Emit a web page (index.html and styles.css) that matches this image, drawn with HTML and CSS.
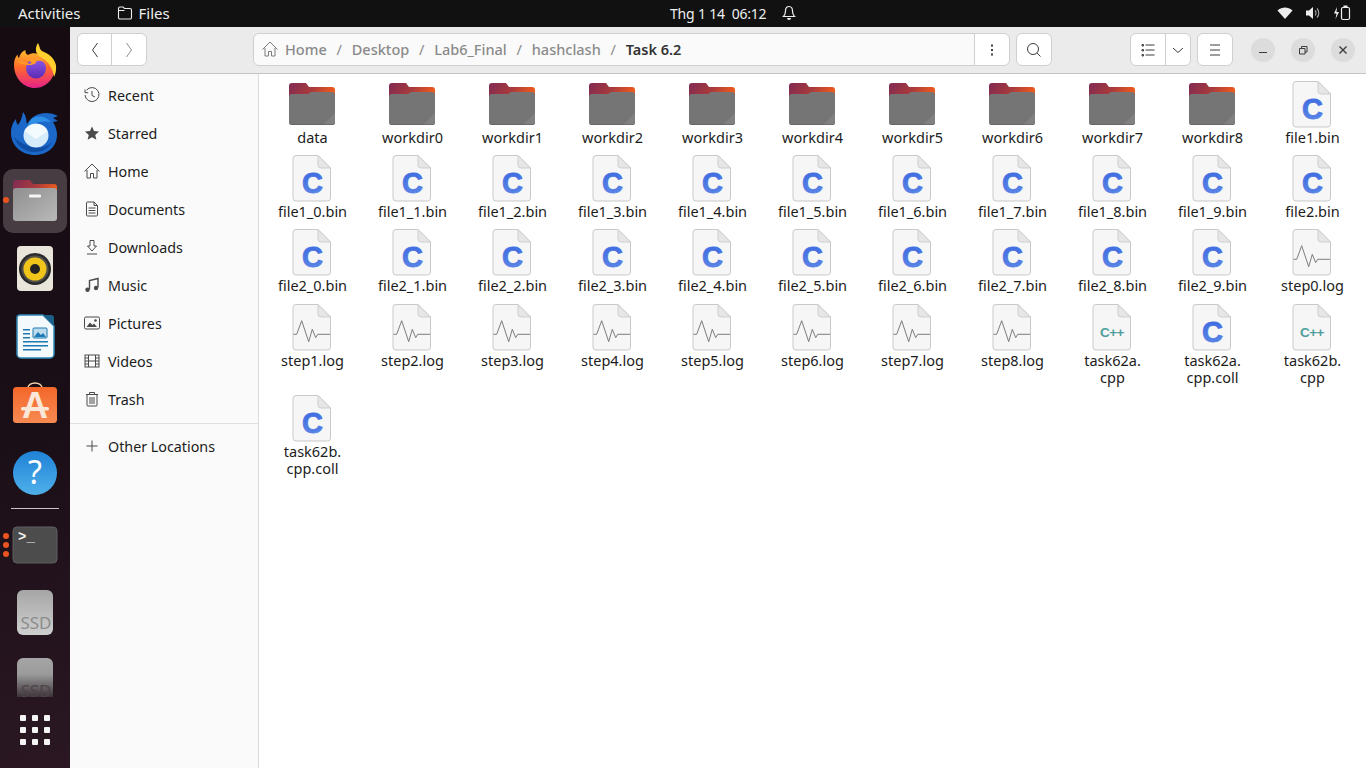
FILE: index.html
```html
<!DOCTYPE html>
<html lang="en">
<head>
    <meta charset="UTF-8">
    <title>Files</title>
    <link rel="stylesheet" href="styles.css">
</head>
<body>
    <!-- shared file icons -->
    <svg class="defs" width="0" height="0">
        <defs>
            <linearGradient id="folderBack" x1="0" y1="0" x2="1" y2="0.3">
                <stop offset="0" stop-color="#7f2a55"/>
                <stop offset="0.55" stop-color="#a83a3c"/>
                <stop offset="1" stop-color="#ec5a1e"/>
            </linearGradient>
            <linearGradient id="cBlue" x1="0" y1="0" x2="0" y2="1">
                <stop offset="0" stop-color="#3a68e0"/>
                <stop offset="1" stop-color="#5f88e6"/>
            </linearGradient>
            <symbol id="folder" viewBox="0 0 48 48">
                <path d="M1 6a3 3 0 0 1 3-3h14l3 4h23a3 3 0 0 1 3 3v12H1z" fill="url(#folderBack)"/>
                <path d="M1 17a3 3 0 0 1 3-3h16l3-2h21a3 3 0 0 1 3 3v27a3 3 0 0 1-3 3H4a3 3 0 0 1-3-3z" fill="#757575"/>
                <path d="M47 33v9a3 3 0 0 1-3 3h-9z" fill="#818181"/>
                <path d="M4 45h40a3 3 0 0 0 3-3v-.6a3 3 0 0 1-3 3H4a3 3 0 0 1-3-3v.6a3 3 0 0 0 3 3z" fill="#5a5a5a"/>
            </symbol>
            <symbol id="sheet" viewBox="0 0 48 48">
                <path d="M8 1.5h22l12.500 12.500V44a3 3 0 0 1-3 3H8a3 3 0 0 1-3-3V4.500a3 3 0 0 1 3-3z" fill="#f6f6f6" stroke="#c9c9c9"/>
                <path d="M30 1.500v9.500a3 3 0 0 0 3 3h9.500z" fill="#e6e6e6" stroke="#cfcfcf"/>
            </symbol>
            <symbol id="cfile" viewBox="0 0 48 48">
                <use href="#sheet" width="48" height="48"/>
                <text x="24.500" y="39" text-anchor="middle" class="c-letter">C</text>
            </symbol>
            <symbol id="cppfile" viewBox="0 0 48 48">
                <use href="#sheet" width="48" height="48"/>
                <text x="24" y="33.700" text-anchor="middle" class="cpp-letter">C++</text>
            </symbol>
            <symbol id="logfile" viewBox="0 0 48 48">
                <use href="#sheet" width="48" height="48"/>
                <path d="M5.500 31.300h3.200l5-13.600 7 21 3.600-12.400 3.400 8.400 2-3.400h12.300" fill="none" stroke="#7d7d7d"/>
            </symbol>
        </defs>
    </svg>

    <header class="topbar">
        <div class="top-left">
            <span class="activities">Activities</span>
            <svg class="top-folder" width="16" height="16" viewBox="0 0 16 16"><path d="M1.500 3.500a1.500 1.500 0 0 1 1.500-1.500h3l1.500 1.500H13a1.500 1.500 0 0 1 1.500 1.500v7.500a1.500 1.500 0 0 1-1.500 1.500H3a1.500 1.500 0 0 1-1.500-1.500zM1.500 5.500H7.500" fill="none" stroke="#eee" stroke-width="1.100"/></svg>
            <span>Files</span>
        </div>
        <span class="clock">Thg 1 14&nbsp; 06:12</span>
        <svg class="bell" width="16" height="16" viewBox="0 0 16 16"><path d="M8 1.500c-2.500 0-3.500 2-3.500 4.500 0 3-1 4.500-2 5.500h11c-1-1-2-2.500-2-5.500 0-2.500-1-4.500-3.500-4.500zM6.500 13.500h3" fill="none" stroke="#eee" stroke-width="1.200"/><path d="M6 13.300h4a2 1.600 0 0 1-4 0z" fill="#eee"/></svg>
        <div class="top-right">
            <svg width="16" height="16" viewBox="0 0 16 16"><path d="M0.500 5.500C3 3.300 5.500 2.500 8 2.500s5 .8 7.500 3L8 14z" fill="#eee"/></svg>
            <svg width="16" height="16" viewBox="0 0 16 16"><path d="M1 5.500h3l4-3.500v12l-4-3.500H1z" fill="#eee"/><path d="M10 5.500a3.500 3.500 0 0 1 0 5M12 3.500a6.500 6.500 0 0 1 0 9" fill="none" stroke="#aaa" stroke-width="1.100"/></svg>
            <svg width="18" height="16" viewBox="0 0 18 16"><path d="M4 2L1 8.500h2.500L2.500 14 6 7H3.500z" fill="#eee"/><rect x="8.500" y="2.500" width="8" height="12" rx="1.500" fill="none" stroke="#eee" stroke-width="1.200"/><rect x="10.500" y="0.500" width="4" height="2" fill="#eee"/></svg>
        </div>
    </header>

    <div class="desktop">
        <nav class="dock">
            <div class="dock-item">
                <svg width="48" height="48" viewBox="0 0 48 48">
                    <defs>
                        <linearGradient id="fxBody" x1="0.500" y1="0" x2="0.500" y2="1">
                            <stop offset="0" stop-color="#ffbd2f"/>
                            <stop offset="0.45" stop-color="#ff6b2a"/>
                            <stop offset="1" stop-color="#e5208a"/>
                        </linearGradient>
                        <linearGradient id="fxCore" x1="0.500" y1="0" x2="0.500" y2="1">
                            <stop offset="0" stop-color="#8f5ae8"/>
                            <stop offset="1" stop-color="#5a2bb5"/>
                        </linearGradient>
                    </defs>
                    <path d="M3 24c0-4 1-8 3.500-10.500 0 2 .8 3 1.500 3.500C9 13 11 10.500 14.500 9c-.5 2.500.5 4 2.500 5 3-2 7-2.500 10-1 6 2 12 0 17.500 10 .5 13-8.500 24-20.500 24C12.500 47 3 37 3 24z" fill="url(#fxBody)"/>
                    <path d="M27 2c3 6 1 7 6 9 6 2.500 11 7 12 14 .5 4-.5 8-2 11-1-7-4-13-9-17-3-2.500-8-4-9-9-.5-3 .5-6 2-8z" fill="#ffd02f"/>
                    <circle cx="25" cy="27.500" r="10" fill="url(#fxCore)"/>
                    <path d="M6 21c4-1 7 0 9.500 1 2 1 5 .5 5 .5-1-3-4-3.500-6-3.500 3-3 9-3.500 14-1.500 2 1 3.500 2 4.500 3.500-3-1.500-6-1.500-8-.5 1 1-2 3.500-6.500 3.500-5 0-10-1.500-12.500-3z" fill="#ff9a2a"/>
                </svg>
            </div>
            <div class="dock-item">
                <svg width="48" height="48" viewBox="0 0 48 48">
                    <path d="M12 3c4 5 3 9 4 12C22 4 36 1 47 7l-5 2 5 3-5 1c3 5 4 9 4 13 0 11-9 20-22 20C11 46 0 37 0 24 0 18 2 13 5 10c0 3 1 5 2 6 3-4 4-8 5-13z" fill="#1b68c9"/>
                    <path d="M22 9c7-3 14-1 18 4-5-1-12-1-18 2-3 1.500-4 3-5 4 0-4 2-8 5-10z" fill="#2f8ee6"/>
                    <path d="M3 28c3 9 11 15 21 15 8 0 14-4 17-10-5 5-13 7-20 5-8-2-14-6-18-10z" fill="#0f4da5"/>
                    <ellipse cx="25" cy="26.500" rx="12.500" ry="12" fill="#d6ecfb"/>
                    <path d="M13.500 22l11.500 8 11.500-8c-1.500-4-6-7-11.500-7s-10 3-11.500 7z" fill="#f4fbff"/>
                </svg>
            </div>
            <div class="dock-item dock-active">
                <span class="run-dot"></span>
                <svg width="48" height="48" viewBox="0 0 48 48">
                    <defs>
                        <linearGradient id="filesFront" x1="0" y1="0" x2="1" y2="1">
                            <stop offset="0" stop-color="#8f8f8f"/>
                            <stop offset="1" stop-color="#b9b9b9"/>
                        </linearGradient>
                    </defs>
                    <path d="M2 6a3 3 0 0 1 3-3h14l3 4h21a3 3 0 0 1 3 3v14H2z" fill="url(#folderBack)"/>
                    <path d="M2 14a3 3 0 0 1 3-3h38a3 3 0 0 1 3 3v27a3 3 0 0 1-3 3H5a3 3 0 0 1-3-3z" fill="url(#filesFront)"/>
                    <rect x="18" y="17.500" width="12" height="3" rx="1" fill="#f5f5f5"/>
                </svg>
            </div>
            <div class="dock-item">
                <svg width="48" height="48" viewBox="0 0 48 48">
                    <rect x="6" y="1" width="36" height="45" rx="4" fill="#e9e5da"/>
                    <circle cx="24" cy="24" r="16" fill="#2a2a2c"/>
                    <circle cx="24" cy="24" r="13.500" fill="#55524a"/>
                    <circle cx="24" cy="24" r="11.500" fill="#f0c419"/>
                    <circle cx="24" cy="24" r="5" fill="#232323"/>
                </svg>
            </div>
            <div class="dock-item">
                <svg width="48" height="48" viewBox="0 0 48 48">
                    <path d="M9 2h23l11 11v28a4 4 0 0 1-4 4H10a4 4 0 0 1-4-4V5a3 3 0 0 1 3-3z" fill="#f4f9fb" stroke="#2f86b8" stroke-width="1.500"/>
                    <path d="M32 2h8a3 3 0 0 1 3 3v8z" fill="#1c5f87"/>
                    <path d="M12 16h7v1.500h-7zM12 20h7v1.500h-7zM12 24h7v1.500h-7zM12 28h25v1.500H12zM12 32h25v1.500H12zM12 36h18v1.500H12z" fill="#1f78b4"/>
                    <rect x="22" y="15" width="14" height="10" rx="1" fill="#bcdcec" stroke="#1f78b4"/>
                    <path d="M23 24l4-5 3 3 2-2 3 4z" fill="#1f78b4"/>
                </svg>
            </div>
            <div class="dock-item">
                <svg width="48" height="48" viewBox="0 0 48 48">
                    <defs>
                        <linearGradient id="bag" x1="0" y1="0" x2="0" y2="1">
                            <stop offset="0" stop-color="#f4672a"/>
                            <stop offset="1" stop-color="#f78a52"/>
                        </linearGradient>
                    </defs>
                    <path d="M17 9V7a7 5 0 0 1 14 0v2" fill="none" stroke="#f0d0a8" stroke-width="1.500"/>
                    <rect x="2" y="6" width="44" height="36" rx="3.500" fill="url(#bag)"/>
                    <text x="24" y="37" text-anchor="middle" class="bag-letter">A</text>
                    <rect x="10" y="26" width="28" height="3.500" rx="1.500" fill="#fbe6da"/>
                </svg>
            </div>
            <div class="dock-item">
                <svg width="48" height="48" viewBox="0 0 48 48">
                    <defs>
                        <linearGradient id="helpBlue" x1="0" y1="0" x2="0" y2="1">
                            <stop offset="0" stop-color="#1f82d6"/>
                            <stop offset="1" stop-color="#4fb0ea"/>
                        </linearGradient>
                    </defs>
                    <circle cx="24" cy="24" r="22" fill="url(#helpBlue)"/>
                    <text x="24" y="35" text-anchor="middle" class="help-mark">?</text>
                </svg>
            </div>
            <div class="dock-sep"></div>
            <div class="dock-item">
                <span class="run-dot run-a"></span>
                <span class="run-dot run-b"></span>
                <span class="run-dot run-c"></span>
                <svg width="48" height="48" viewBox="0 0 48 48">
                    <rect x="2" y="6" width="44" height="36" rx="4" fill="#4c4c4c" stroke="#5e5e5e"/>
                    <text x="7" y="20" class="term-prompt">&gt;_</text>
                </svg>
            </div>
            <div class="dock-item">
                <svg width="48" height="48" viewBox="0 0 48 48">
                    <defs>
                        <linearGradient id="ssdBody" x1="0" y1="0" x2="0" y2="1">
                            <stop offset="0" stop-color="#a6a6a6"/>
                            <stop offset="1" stop-color="#cfcfcf"/>
                        </linearGradient>
                    </defs>
                    <rect x="6" y="1" width="36" height="45" rx="6" fill="url(#ssdBody)"/>
                    <text x="25" y="40" text-anchor="middle" class="ssd-label">SSD</text>
                </svg>
            </div>
            <div class="dock-item dock-faded">
                <svg width="48" height="48" viewBox="0 0 48 48">
                    <defs>
                        <linearGradient id="ssdFade" x1="0" y1="0" x2="0" y2="1">
                            <stop offset="0" stop-color="#a6a6a6"/>
                            <stop offset="0.42" stop-color="#9a9a9a"/>
                            <stop offset="1" stop-color="#3c3238"/>
                        </linearGradient>
                    </defs>
                    <path d="M6 7a6 6 0 0 1 6-6h24a6 6 0 0 1 6 6v33H6z" fill="url(#ssdFade)"/>
                    <text x="25" y="40" text-anchor="middle" class="ssd-label ssd-dim">SSD</text>
                </svg>
            </div>
            <div class="app-grid">
                <i></i><i></i><i></i><i></i><i></i><i></i><i></i><i></i><i></i>
            </div>
        </nav>

        <div class="window">
            <div class="headerbar">
                <div class="btn-group nav-btns">
                    <button class="btn"><svg width="16" height="16" viewBox="0 0 16 16"><path d="M10.500 1L5.500 8l5 7" class="line"/></svg></button>
                    <button class="btn"><svg width="16" height="16" viewBox="0 0 16 16"><path d="M5.500 1l5 7-5 7" class="line dim"/></svg></button>
                </div>
                <div class="btn-group pathbar">
                    <div class="path">
                        <svg class="path-home" width="16" height="16" viewBox="0 0 16 16"><path d="M0.500 8.500L8 1l7.500 7.500M3 7v8h3.500v-4.500h3V15H13V7" class="line dim2"/></svg>
                        <span class="crumb">Home</span><span class="slash">/</span>
                        <span class="crumb">Desktop</span><span class="slash">/</span>
                        <span class="crumb">Lab6_Final</span><span class="slash">/</span>
                        <span class="crumb">hashclash</span><span class="slash">/</span>
                        <span class="crumb current">Task 6.2</span>
                    </div>
                    <button class="btn btn-more"><svg width="16" height="16" viewBox="0 0 16 16"><path d="M7 2.500h2v2H7zM7 7h2v2H7zM7 11.500h2v2H7z" fill="#3d3d3d"/></svg></button>
                </div>
                <button class="btn btn-solo search-btn"><svg width="16" height="16" viewBox="0 0 16 16"><circle cx="7" cy="7" r="5.500" class="line"/><path d="M11 11l3.500 3.500" class="line"/></svg></button>
                <div class="btn-group view-btns">
                    <button class="btn"><svg width="16" height="16" viewBox="0 0 16 16"><path d="M5.500 3h9M5.500 8h9M5.500 13h9M2 2.500h1.500V4H2zM2 7.500h1.500V9H2zM2 12.500h1.500V14H2z" class="line"/></svg></button>
                    <button class="btn btn-arrow"><svg width="12" height="12" viewBox="0 0 12 12"><path d="M1 4l5 4.500L11 4" class="line"/></svg></button>
                </div>
                <button class="btn btn-solo menu-btn"><svg width="16" height="16" viewBox="0 0 16 16"><path d="M3 3h10M3 8h10M3 13h10" class="line"/></svg></button>
                <div class="win-btns">
                    <span class="win-btn"><svg width="12" height="12" viewBox="0 0 12 12"><path d="M2 8.500h8" class="line"/></svg></span>
                    <span class="win-btn"><svg width="12" height="12" viewBox="0 0 12 12"><path d="M2.500 4.500h5.500v5.500H2.500zM4.500 4.500V2.500H10v5.500H8" class="line"/></svg></span>
                    <span class="win-btn"><svg width="12" height="12" viewBox="0 0 12 12"><path d="M2.500 2.500l7 7M9.500 2.500l-7 7" class="line thick"/></svg></span>
                </div>
            </div>

            <div class="content">
                <aside class="sidebar">
                    <a class="place"><svg width="16" height="16" viewBox="0 0 16 16"><path d="M2.500 3.200A7 7 0 1 1 1 8M1 2.500v3.200h3.200M8 4v4.500l3 1.500" class="line side"/></svg>Recent</a>
                    <a class="place"><svg width="16" height="16" viewBox="0 0 16 16"><path d="M8 1.500l2 4.600 5 .5-3.800 3.300 1.200 4.900L8 12.200l-4.400 2.600 1.200-4.900L1 6.600l5-.5z" fill="#4a4a4a"/></svg>Starred</a>
                    <a class="place"><svg width="16" height="16" viewBox="0 0 16 16"><path d="M0.500 8.500L8 1l7.500 7.500M3 7v8h3.500v-4.500h3V15H13V7" class="line side"/></svg>Home</a>
                    <a class="place"><svg width="16" height="16" viewBox="0 0 16 16"><path d="M2.500 2a1 1 0 0 1 1-1H10l3.500 3.500V14a1 1 0 0 1-1 1h-9a1 1 0 0 1-1-1zM10 1v3.500h3.500M4.500 7h7M4.500 9.500h7M4.500 12h7" class="line side"/></svg>Documents</a>
                    <a class="place"><svg width="16" height="16" viewBox="0 0 16 16"><path d="M6 1.500h4V7h2.500L8 12 3.500 7H6zM3 15h10" class="line side"/></svg>Downloads</a>
                    <a class="place"><svg width="16" height="16" viewBox="0 0 16 16"><path d="M5.500 12.500V3.500L14 1.500v9" class="line side thick"/><circle cx="3.500" cy="12.800" r="2.200" fill="#4a4a4a"/><circle cx="12" cy="11" r="2.200" fill="#4a4a4a"/></svg>Music</a>
                    <a class="place"><svg width="16" height="16" viewBox="0 0 16 16"><rect x="0.500" y="2" width="15" height="12" rx="1.500" class="line side"/><path d="M2.500 12l3.500-4.500 2.500 2.500 1.500-1.500 3 3.500z" fill="#4a4a4a"/><circle cx="11.500" cy="5.500" r="1.300" fill="#4a4a4a"/></svg>Pictures</a>
                    <a class="place"><svg width="16" height="16" viewBox="0 0 16 16"><rect x="1" y="2" width="14" height="12" class="line side"/><path d="M4.500 2v12M11.500 2v12M1 5h3.500M1 8h14M1 11h3.500M11.500 5H15M11.500 11H15" class="line side"/></svg>Videos</a>
                    <a class="place"><svg width="16" height="16" viewBox="0 0 16 16"><path d="M2 3.500h12M5.500 3.500V1.500h5v2M3 3.500V14a1 1 0 0 0 1 1h8a1 1 0 0 0 1-1V3.500M6 6v7M8 6v7M10 6v7" class="line side"/></svg>Trash</a>
                    <div class="side-sep"></div>
                    <a class="place"><svg width="16" height="16" viewBox="0 0 16 16"><path d="M8 2.500v11M2.500 8h11" class="line side"/></svg>Other Locations</a>
                </aside>

                <main class="files">
                    <div class="item"><svg class="icon"><use href="#folder"/></svg><span class="name">data</span></div>
                    <div class="item"><svg class="icon"><use href="#folder"/></svg><span class="name">workdir0</span></div>
                    <div class="item"><svg class="icon"><use href="#folder"/></svg><span class="name">workdir1</span></div>
                    <div class="item"><svg class="icon"><use href="#folder"/></svg><span class="name">workdir2</span></div>
                    <div class="item"><svg class="icon"><use href="#folder"/></svg><span class="name">workdir3</span></div>
                    <div class="item"><svg class="icon"><use href="#folder"/></svg><span class="name">workdir4</span></div>
                    <div class="item"><svg class="icon"><use href="#folder"/></svg><span class="name">workdir5</span></div>
                    <div class="item"><svg class="icon"><use href="#folder"/></svg><span class="name">workdir6</span></div>
                    <div class="item"><svg class="icon"><use href="#folder"/></svg><span class="name">workdir7</span></div>
                    <div class="item"><svg class="icon"><use href="#folder"/></svg><span class="name">workdir8</span></div>
                    <div class="item"><svg class="icon"><use href="#cfile"/></svg><span class="name">file1.bin</span></div>

                    <div class="item"><svg class="icon"><use href="#cfile"/></svg><span class="name">file1_0.bin</span></div>
                    <div class="item"><svg class="icon"><use href="#cfile"/></svg><span class="name">file1_1.bin</span></div>
                    <div class="item"><svg class="icon"><use href="#cfile"/></svg><span class="name">file1_2.bin</span></div>
                    <div class="item"><svg class="icon"><use href="#cfile"/></svg><span class="name">file1_3.bin</span></div>
                    <div class="item"><svg class="icon"><use href="#cfile"/></svg><span class="name">file1_4.bin</span></div>
                    <div class="item"><svg class="icon"><use href="#cfile"/></svg><span class="name">file1_5.bin</span></div>
                    <div class="item"><svg class="icon"><use href="#cfile"/></svg><span class="name">file1_6.bin</span></div>
                    <div class="item"><svg class="icon"><use href="#cfile"/></svg><span class="name">file1_7.bin</span></div>
                    <div class="item"><svg class="icon"><use href="#cfile"/></svg><span class="name">file1_8.bin</span></div>
                    <div class="item"><svg class="icon"><use href="#cfile"/></svg><span class="name">file1_9.bin</span></div>
                    <div class="item"><svg class="icon"><use href="#cfile"/></svg><span class="name">file2.bin</span></div>

                    <div class="item"><svg class="icon"><use href="#cfile"/></svg><span class="name">file2_0.bin</span></div>
                    <div class="item"><svg class="icon"><use href="#cfile"/></svg><span class="name">file2_1.bin</span></div>
                    <div class="item"><svg class="icon"><use href="#cfile"/></svg><span class="name">file2_2.bin</span></div>
                    <div class="item"><svg class="icon"><use href="#cfile"/></svg><span class="name">file2_3.bin</span></div>
                    <div class="item"><svg class="icon"><use href="#cfile"/></svg><span class="name">file2_4.bin</span></div>
                    <div class="item"><svg class="icon"><use href="#cfile"/></svg><span class="name">file2_5.bin</span></div>
                    <div class="item"><svg class="icon"><use href="#cfile"/></svg><span class="name">file2_6.bin</span></div>
                    <div class="item"><svg class="icon"><use href="#cfile"/></svg><span class="name">file2_7.bin</span></div>
                    <div class="item"><svg class="icon"><use href="#cfile"/></svg><span class="name">file2_8.bin</span></div>
                    <div class="item"><svg class="icon"><use href="#cfile"/></svg><span class="name">file2_9.bin</span></div>
                    <div class="item"><svg class="icon"><use href="#logfile"/></svg><span class="name">step0.log</span></div>

                    <div class="item"><svg class="icon"><use href="#logfile"/></svg><span class="name">step1.log</span></div>
                    <div class="item"><svg class="icon"><use href="#logfile"/></svg><span class="name">step2.log</span></div>
                    <div class="item"><svg class="icon"><use href="#logfile"/></svg><span class="name">step3.log</span></div>
                    <div class="item"><svg class="icon"><use href="#logfile"/></svg><span class="name">step4.log</span></div>
                    <div class="item"><svg class="icon"><use href="#logfile"/></svg><span class="name">step5.log</span></div>
                    <div class="item"><svg class="icon"><use href="#logfile"/></svg><span class="name">step6.log</span></div>
                    <div class="item"><svg class="icon"><use href="#logfile"/></svg><span class="name">step7.log</span></div>
                    <div class="item"><svg class="icon"><use href="#logfile"/></svg><span class="name">step8.log</span></div>
                    <div class="item"><svg class="icon"><use href="#cppfile"/></svg><span class="name">task62a.<br>cpp</span></div>
                    <div class="item"><svg class="icon"><use href="#cfile"/></svg><span class="name">task62a.<br>cpp.coll</span></div>
                    <div class="item"><svg class="icon"><use href="#cppfile"/></svg><span class="name">task62b.<br>cpp</span></div>

                    <div class="item"><svg class="icon"><use href="#cfile"/></svg><span class="name">task62b.<br>cpp.coll</span></div>
                </main>
            </div>
        </div>
    </div>
</body>
</html>
```

FILE: styles.css
```css
* {
    box-sizing: border-box;
}

body {
    margin: 0;
    width: 1366px;
    height: 768px;
    overflow: hidden;
    font-family: "Noto Sans", "Open Sans", sans-serif;
    font-size: 14.5px;
    color: #1c1c1c;
    background-color: white;
}

.defs {
    position: absolute;
}

/* top bar */
.topbar {
    height: 27px;
    padding-bottom: 1px;
    background-color: #111111;
    color: #eeeeee;
    font-size: 15px;
    display: flex;
    align-items: center;
}

.top-left {
    width: 670px;
    padding-left: 18px;
    display: flex;
    align-items: center;
}

.top-folder {
    margin-left: 36px;
    margin-right: 6px;
}

.clock {
    font-size: 14px;
    letter-spacing: -0.2px;
}

.bell {
    margin-left: 15px;
}

.top-right {
    margin-left: auto;
    padding-right: 15px;
    display: flex;
    align-items: center;
    gap: 12px;
}

.desktop {
    height: 741px;
    display: flex;
}

/* dock */
.dock {
    width: 70px;
    flex: none;
    padding-top: 4px;
    background: linear-gradient(170deg, #150b11, #1b0f17 55%, #2a1722);
    overflow: hidden;
}

.dock-item {
    position: relative;
    height: 68px;
    display: flex;
    align-items: center;
    justify-content: center;
}

.dock-active::before {
    content: "";
    position: absolute;
    left: 3px;
    top: 2px;
    width: 64px;
    height: 64px;
    border-radius: 10px;
    background-color: #473c42;
}

.dock-item svg {
    position: relative;
}

.dock-faded {
    height: 50px;
    overflow: hidden;
    align-items: flex-start;
    padding-top: 10px;
}

.run-dot {
    position: absolute;
    z-index: 1;
    left: 3px;
    top: 30px;
    width: 6px;
    height: 6px;
    border-radius: 50%;
    background-color: #e95420;
}

.run-a { top: 22px; }
.run-b { top: 31px; }
.run-c { top: 40px; }

.dock-sep {
    height: 1px;
    margin: 1px 11px 2px;
    background-color: #c9c5c7;
}

.app-grid {
    width: 30px;
    margin: 15px auto 0;
    padding-top: 3px;
    display: grid;
    grid-template-columns: repeat(3, 6px);
    gap: 6px;
}

.app-grid i {
    width: 6px;
    height: 6px;
    border-radius: 1px;
    background-color: #f4f4f4;
}

.bag-letter {
    font-family: "Liberation Sans", sans-serif;
    font-weight: bold;
    font-size: 36px;
    fill: #fbe6da;
}

.help-mark {
    font-family: "Noto Sans", sans-serif;
    font-size: 32px;
    fill: white;
}

.term-prompt {
    font-family: "Liberation Mono", monospace;
    font-size: 14px;
    font-weight: bold;
    fill: #f2f2f2;
}

.ssd-label {
    font-family: "Noto Sans", sans-serif;
    font-size: 17px;
    fill: #8c8c8c;
}

.ssd-dim {
    fill: #4d4449;
}

.c-letter {
    font-family: "Liberation Sans", sans-serif;
    font-weight: bold;
    font-size: 29px;
    fill: url(#cBlue);
    stroke: url(#cBlue);
    stroke-width: 0.9;
}

.cpp-letter {
    font-family: "Liberation Sans", sans-serif;
    font-weight: bold;
    font-size: 13.500px;
    letter-spacing: -0.5px;
    fill: #4f9d9d;
}

/* window */
.window {
    flex: 1;
    display: flex;
    flex-direction: column;
}

.headerbar {
    height: 47px;
    padding: 6px 0 7px 7px;
    background-color: #ebebeb;
    border-bottom: 1px solid #c4c4c4;
    display: flex;
    align-items: stretch;
}

.btn-group {
    display: flex;
}

.btn {
    padding: 0;
    display: flex;
    align-items: center;
    justify-content: center;
    background-color: white;
    border: 1px solid #cfcfcf;
}

.btn-solo {
    width: 36px;
    border-radius: 6px;
}

.nav-btns .btn {
    width: 35px;
}

.nav-btns .btn:last-child {
    width: 36px;
}

.btn-group .btn:first-child {
    border-radius: 6px 0 0 6px;
}

.btn-group .btn:last-child {
    margin-left: -1px;
    border-radius: 0 6px 6px 0;
}

.line {
    fill: none;
    stroke: #3d3d3d;
    stroke-width: 1;
}

.dim { stroke: #8e8e8e; }
.dim2 { stroke: #7d7d7d; }
.side { stroke: #4a4a4a; }
.thick { stroke-width: 1.400; }

.pathbar {
    margin-left: 106px;
    width: 757px;
}

.path {
    flex: 1;
    padding: 0 0 2px 8px;
    display: flex;
    align-items: center;
    background-color: #fafafa;
    border: 1px solid #cfcfcf;
    border-radius: 6px 0 0 6px;
    font-weight: 500;
    color: #8a8a8a;
}

.path-home {
    margin-right: 7px;
}

.slash {
    width: 25px;
    text-align: center;
    font-weight: 400;
}

.current {
    color: #333333;
    font-weight: 600;
}

.btn-more {
    width: 36px;
}

.search-btn {
    margin-left: 6px;
}

.view-btns {
    margin-left: 78px;
}

.view-btns .btn {
    width: 36px;
}

.view-btns .btn-arrow {
    width: 26px;
}

.menu-btn {
    margin-left: 6px;
}

.win-btns {
    margin-left: 18px;
    display: flex;
    align-items: center;
    gap: 16px;
}

.win-btn {
    width: 24px;
    height: 24px;
    border-radius: 50%;
    background-color: #dcdcdc;
    display: flex;
    align-items: center;
    justify-content: center;
}

/* content */
.content {
    flex: 1;
    display: flex;
}

.sidebar {
    width: 189px;
    flex: none;
    padding-top: 2px;
    font-size: 14.300px;
    background-color: #fafafa;
    border-right: 1px solid #dcdcdc;
}

.place {
    height: 38px;
    padding-left: 14px;
    display: flex;
    align-items: center;
    gap: 8px;
}

.side-sep {
    height: 1px;
    margin: 5px 0 3px;
    background-color: #dedede;
}

.files {
    flex: 1;
    padding: 6px 0 0 3px;
    display: grid;
    grid-template-columns: repeat(11, 100px);
    grid-auto-rows: min-content;
    align-content: start;
}

.item {
    padding-bottom: 8.200px;
    display: flex;
    flex-direction: column;
    align-items: center;
    text-align: center;
}

.icon {
    width: 48px;
    height: 48px;
    margin-bottom: 1px;
}

.name {
    padding-left: 1px;
    line-height: 17px;
}
```
